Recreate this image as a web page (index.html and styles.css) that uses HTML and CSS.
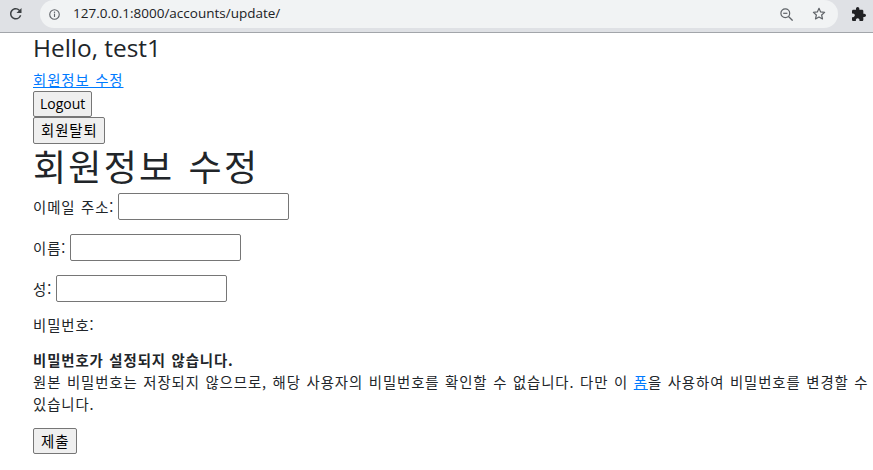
FILE: index.html
```html
<!DOCTYPE html>
<html lang="ko">
<head>
<meta charset="utf-8">
<title>회원정보 수정</title>
<link rel="stylesheet" href="styles.css">
</head>
<body>
<div class="toolbar">
  <svg class="reload" viewBox="4 4 16 16"><path fill="#3c4043" d="M17.65 6.35A7.958 7.958 0 0012 4c-4.42 0-7.99 3.58-7.99 8s3.57 8 7.99 8c3.73 0 6.84-2.55 7.730-6h-2.08A5.99 5.99 0 0112 18c-3.31 0-6-2.690-6-6s2.69-6 6-6c1.66 0 3.14.69 4.22 1.78L13 11h7V4l-2.35 2.35z"/></svg>
  <div class="omnibox">
    <svg class="info" viewBox="0 0 12 12"><circle cx="6" cy="6" r="5.2" fill="none" stroke="#5f6368" stroke-width="1.2"/><rect x="5.4" y="5" width="1.2" height="3.7" fill="#5f6368"/><circle cx="6" cy="3.5" r="0.75" fill="#5f6368"/></svg>
    <span class="url">127.0.0.1:8000/accounts/update/</span>
    <span class="spacer"></span>
    <svg class="zoom-out" viewBox="0 0 13 13"><circle cx="5.3" cy="5.3" r="4.4" fill="none" stroke="#5f6368" stroke-width="1.2"/><path d="M8.5 8.5L12.6 12.6" stroke="#5f6368" stroke-width="1.3"/><path d="M3.2 5.3H7.4" stroke="#5f6368" stroke-width="1.2"/></svg>
    <svg class="star" viewBox="0 0 14 14"><path d="M7 1.3l1.65 3.65 3.95.4-2.97 2.65.86 3.9L7 9.9l-3.49 2 .86-3.9L1.4 5.35l3.95-.4z" fill="none" stroke="#5f6368" stroke-width="1.2" stroke-linejoin="round"/></svg>
  </div>
  <svg class="puzzle" viewBox="2 1 21 21"><path fill="#202124" d="M20.5 11H19V7c0-1.1-.9-2-2-2h-4V3.5C13 2.12 11.88 1 10.5 1S8 2.12 8 3.5V5H4c-1.1 0-1.99.9-1.99 2v3.8H3.5c1.49 0 2.7 1.21 2.7 2.7s-1.21 2.7-2.7 2.7H2V20c0 1.1.9 2 2 2h3.8v-1.5c0-1.49 1.21-2.7 2.7-2.7 1.49 0 2.7 1.21 2.7 2.7V22H17c1.1 0 2-.9 2-2v-4h1.5c1.38 0 2.5-1.12 2.5-2.5S21.88 11 20.5 11z"/></svg>
</div>
<main class="page">
  <h3 class="greeting">Hello, test1</h3>
  <a class="nav-link" href="#">회원정보 수정</a>
  <form class="btn-form"><button type="button" class="btn btn-latin">Logout</button></form>
  <form class="btn-form"><button type="button" class="btn">회원탈퇴</button></form>
  <h1 class="title">회원정보 수정</h1>
  <form class="profile-form">
    <p class="field-row"><label>이메일 주소:</label><input type="text" class="field"></p>
    <p class="field-row"><label>이름:</label><input type="text" class="field"></p>
    <p class="field-row"><label>성:</label><input type="text" class="field"></p>
    <p class="pw-label">비밀번호:</p>
    <div class="pw-state"><strong>비밀번호가 설정되지 않습니다.</strong></div>
    <div class="helptext">원본 비밀번호는 저장되지 않으므로, 해당 사용자의 비밀번호를 확인할 수 없습니다. 다만 이 <a class="inline-link" href="#">폼</a>을 사용하여 비밀번호를 변경할 수<br>있습니다.</div>
    <button type="button" class="btn submit">제출</button>
  </form>
</main>
</body>
</html>
```

FILE: styles.css
```css
* { box-sizing: border-box; }

body {
  margin: 0;
  background: #fff;
  color: #212529;
  font-family: "Noto Sans CJK KR", sans-serif;
  font-size: 14.4px;
  line-height: 21.6px;
  letter-spacing: 0.0625em;
  word-spacing: 0.05em;
}

/* browser toolbar */
.toolbar {
  display: flex;
  align-items: flex-start;
  height: 33px;
  background: #dfe1e5;
  border-bottom: 1px solid #a2a5aa;
  letter-spacing: 0;
  word-spacing: 0;
}
.reload { width: 11.5px; height: 11.5px; margin: 8px 0 0 10px; flex: none; }
.omnibox {
  display: flex;
  align-items: center;
  width: 798px;
  height: 28px;
  margin-left: 18.5px;
  padding: 0 12px 0 9px;
  border-radius: 14px;
  background: #f1f3f4;
  flex: none;
}
.info { width: 11px; height: 11px; flex: none; }
.url {
  margin-left: 13px;
  font: 400 13.5px/1 "Open Sans", sans-serif;
  color: #202124;
}
.spacer { flex: 1; }
.zoom-out { width: 13px; height: 13px; flex: none; }
.star { width: 14px; height: 14px; margin-left: 19px; flex: none; }
.puzzle { width: 14px; height: 14px; margin: 7px 0 0 14px; flex: none; }

/* page */
.page { padding-left: 33px; }

.greeting {
  margin: 0 0 6px;
  font: 400 24.4px/30.24px "Open Sans", sans-serif;
  letter-spacing: 0;
  word-spacing: 0;
}
.nav-link {
  display: block;
  width: fit-content;
  color: #007bff;
  text-decoration: underline;
}
.btn-form { margin: 0; }
.btn {
  display: flex;
  align-items: center;
  height: 26.4px;
  margin: 0;
  padding: 0 6.5px 0 7px;
  border: 1px solid #767676;
  border-radius: 2px;
  background: #efefef;
  color: #000;
  font: 400 14.4px/1 "Noto Sans CJK KR", sans-serif;
  letter-spacing: 0.0625em;
}
.btn-latin {
  padding: 0 6px;
  font: 400 14px/1 "Open Sans", sans-serif;
  letter-spacing: 0;
}

.title {
  margin: 0 0 6.5px;
  font: 400 36px/43.2px "Noto Sans CJK KR", sans-serif;
  letter-spacing: 0.0625em;
  word-spacing: 0.05em;
}

.profile-form { margin: 0; }
.field-row {
  display: flex;
  align-items: center;
  gap: 3.9px;
  height: 26.6px;
  margin: 0 0 14.4px;
}
.field {
  width: 171px;
  height: 26.4px;
  padding: 0 2px;
  border: 1px solid #767676;
  border-radius: 2px;
  background: #fff;
}
.pw-label { margin: -1.8px 0 13.4px; }
.pw-state { margin: 0; }
.pw-state strong { font-weight: 700; }
.helptext { margin: 0; }
.inline-link { color: #007bff; text-decoration: underline; }
.submit { margin-top: 13.3px; }
```
